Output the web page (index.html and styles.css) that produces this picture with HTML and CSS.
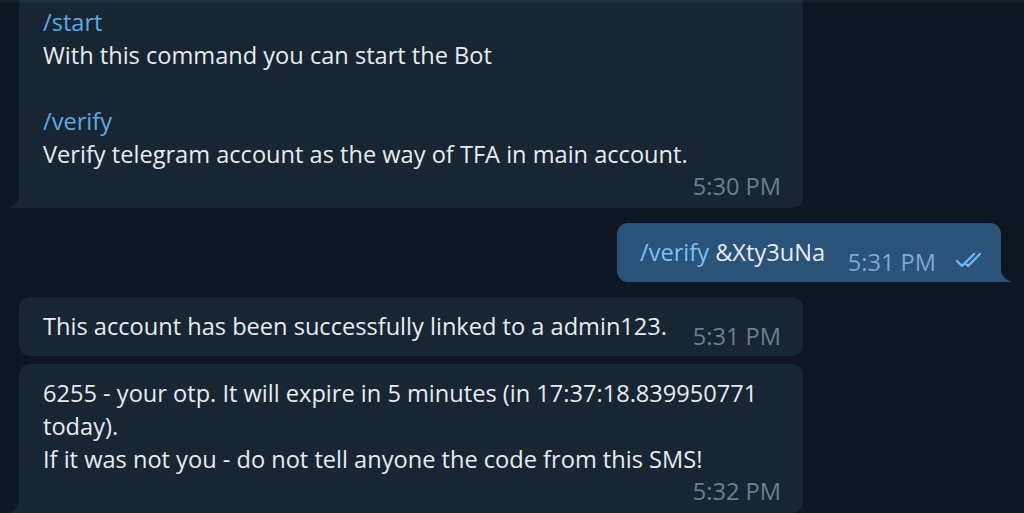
FILE: index.html
```html
<!DOCTYPE html>
<html>
<head>
<meta charset="utf-8">
<link rel="stylesheet" href="styles.css">
</head>
<body>
<div class="topshade"></div>
<main class="chat">
  <div class="msg in">
    <div class="bubble multi tail-left">
      <div class="text"><span class="cmd">/start</span><br>With this command you can start the Bot<br><br><span class="cmd">/verify</span><br>Verify telegram account as the way of TFA in main account.</div>
      <div class="time-row"><span class="time">5:30 PM</span></div>
      <svg class="tail tl" width="12" height="16" viewBox="0 0 12 16"><path d="M12 0 C12 8 7 14 0 16 H12 Z" fill="#182533"/></svg>
    </div>
  </div>

  <div class="msg out">
    <div class="bubble single tail-right">
      <div class="text"><span class="cmd-out">/verify</span> &amp;Xty3uNa</div>
      <span class="time out-time">5:31 PM</span>
      <svg class="checks" width="33" height="16" viewBox="0 0 33 16"><path d="M2 9 L7 14 L19 2 M13 14 L25 2 M10 11 L13 14" fill="none" stroke="#6fb6f2" stroke-width="2.4" stroke-linecap="round" stroke-linejoin="round"/></svg>
      <svg class="tail tr" width="12" height="16" viewBox="0 0 12 16"><path d="M0 0 C0 8 5 14 12 16 H0 Z" fill="#2b5278"/></svg>
    </div>
  </div>

  <div class="group">
    <div class="msg in">
      <div class="bubble single">
        <div class="text">This account has been successfully linked to a admin123.</div>
        <span class="time">5:31 PM</span>
      </div>
    </div>
    <div class="msg in">
      <div class="bubble multi tail-left">
        <div class="text">6255 - your otp. It will expire in 5 minutes (in 17:37:18.839950771 today).<br>If it was not you - do not tell anyone the code from this SMS!</div>
        <div class="time-row"><span class="time">5:32 PM</span></div>
        <svg class="tail tl" width="12" height="16" viewBox="0 0 12 16"><path d="M12 0 C12 8 7 14 0 16 H12 Z" fill="#182533"/></svg>
      </div>
    </div>
  </div>
</main>
</body>
</html>
```

FILE: styles.css
```css
* { box-sizing: border-box; }

html, body {
  margin: 0;
  padding: 0;
  height: 100%;
  overflow: hidden;
}

body {
  background: #0e1621;
  font-family: "Open Sans", "Noto Sans", sans-serif;
  color: #e6ecf1;
  position: relative;
}

.topshade {
  position: absolute;
  top: 0;
  left: 0;
  right: 0;
  height: 3px;
  background: rgba(255, 255, 255, 0.035);
  z-index: 2;
}

.chat {
  display: flex;
  flex-direction: column;
  gap: 15px;
  margin-top: -7px;
  padding: 0 23px 0 19px;
}

.group {
  display: flex;
  flex-direction: column;
  gap: 8px;
}

.msg {
  display: flex;
}

.msg.out {
  justify-content: flex-end;
}

.bubble {
  position: relative;
  background: #182533;
  border-radius: 11px;
  font-size: 23.6px;
  line-height: 33px;
}

.msg.in .bubble {
  width: 784px;
  padding: 13px 22px 13px 24px;
}

.bubble.multi {
  padding-bottom: 9px !important;
}

.bubble.single {
  display: flex;
  align-items: flex-end;
  height: 59px;
}

.msg.out .bubble {
  background: #2b5278;
  width: 384px;
  padding: 12px 13px 13px 23px;
}

.bubble.tail-left { border-bottom-left-radius: 0; }
.bubble.tail-right { border-bottom-right-radius: 0; }

.tail {
  position: absolute;
  bottom: 0;
}
.tail.tl { left: -11px; }
.tail.tr { right: -11px; }

.cmd { color: #5caae6; }
.cmd-out { color: #7cc0f8; }

.time {
  color: #6d7f8f;
  font-size: 23.6px;
  line-height: 26px;
}

.bubble.single .time {
  margin-left: auto;
  margin-bottom: -6px;
  white-space: nowrap;
}

.time-row {
  text-align: right;
  line-height: 26px;
  margin-top: 2px;
}

.bubble.single .text { white-space: nowrap; }

.time.out-time {
  color: #7fa8cf;
  margin-left: 23px;
}

.checks {
  margin: 0 0 1px 19px;
  flex: none;
  align-self: flex-end;
}
```
